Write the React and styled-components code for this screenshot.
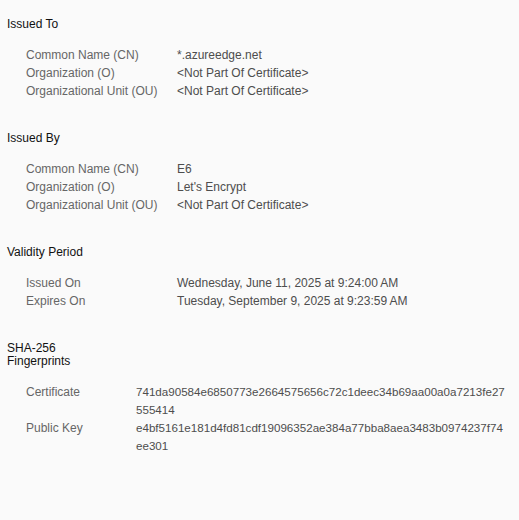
import React from 'react'
import styled, { createGlobalStyle } from 'styled-components'

const GlobalStyle = createGlobalStyle`
    html, body {
        margin:0;
        padding:0;
        background:#fafafa;
    }
    body {
        font-family:"Segoe UI", "Liberation Sans", Arial, sans-serif;
        font-size:12px;
    }
`

const PageDiv = styled.div`
    width:519px;
    min-height:520px;
    box-sizing:border-box;
    padding:18px 0 0 7px;
    background:#fafafa;
`

const SectionDiv = styled.section`
    margin-bottom:32px;
`

const HeadingDiv = styled.div`
    color:#111;
    line-height:13px;
    max-width:100px;
    margin-bottom:15px;
`

const RowsDiv = styled.div`
    padding-left:19px;
`

const RowDiv = styled.div`
    display:grid;
    grid-template-columns:${p => p.$labelWidth}px 1fr;
    line-height:18px;
`

const LabelSpan = styled.span`
    color:#666;
    white-space:nowrap;
`

const ValueDiv = styled.div`
    color:#4d4d4d;
    font-size:${p => (p.$hash ? '11.6px' : '12px')};
`

const sections = [
    {
        title: 'Issued To',
        labelWidth: 151,
        rows: [
            ['Common Name (CN)', ['*.azureedge.net']],
            ['Organization (O)', ['<Not Part Of Certificate>']],
            ['Organizational Unit (OU)', ['<Not Part Of Certificate>']],
        ],
    },
    {
        title: 'Issued By',
        labelWidth: 151,
        rows: [
            ['Common Name (CN)', ['E6']],
            ['Organization (O)', ["Let's Encrypt"]],
            ['Organizational Unit (OU)', ['<Not Part Of Certificate>']],
        ],
    },
    {
        title: 'Validity Period',
        labelWidth: 151,
        rows: [
            ['Issued On', ['Wednesday, June 11, 2025 at 9:24:00\u2009AM']],
            ['Expires On', ['Tuesday, September 9, 2025 at 9:23:59\u2009AM']],
        ],
    },
    {
        title: 'SHA-256 Fingerprints',
        labelWidth: 110,
        hash: true,
        rows: [
            ['Certificate', ['741da90584e6850773e2664575656c72c1deec34b69aa00a0a7213fe27', '555414']],
            ['Public Key', ['e4bf5161e181d4fd81cdf19096352ae384a77bba8aea3483b0974237f74', 'ee301']],
        ],
    },
]

const Section = ({ title, labelWidth, hash, rows }) => <SectionDiv>
    <HeadingDiv>{title}</HeadingDiv>
    <RowsDiv>
        {rows.map(([label, lines]) => <RowDiv key={label} $labelWidth={labelWidth}>
            <LabelSpan>{label}</LabelSpan>
            <ValueDiv $hash={hash}>
                {lines.map(x => <div key={x}>{x}</div>)}
            </ValueDiv>
        </RowDiv>)}
    </RowsDiv>
</SectionDiv>

export default function App() {
    return <PageDiv>
        <GlobalStyle />
        {sections.map(s => <Section key={s.title} {...s} />)}
    </PageDiv>
}
